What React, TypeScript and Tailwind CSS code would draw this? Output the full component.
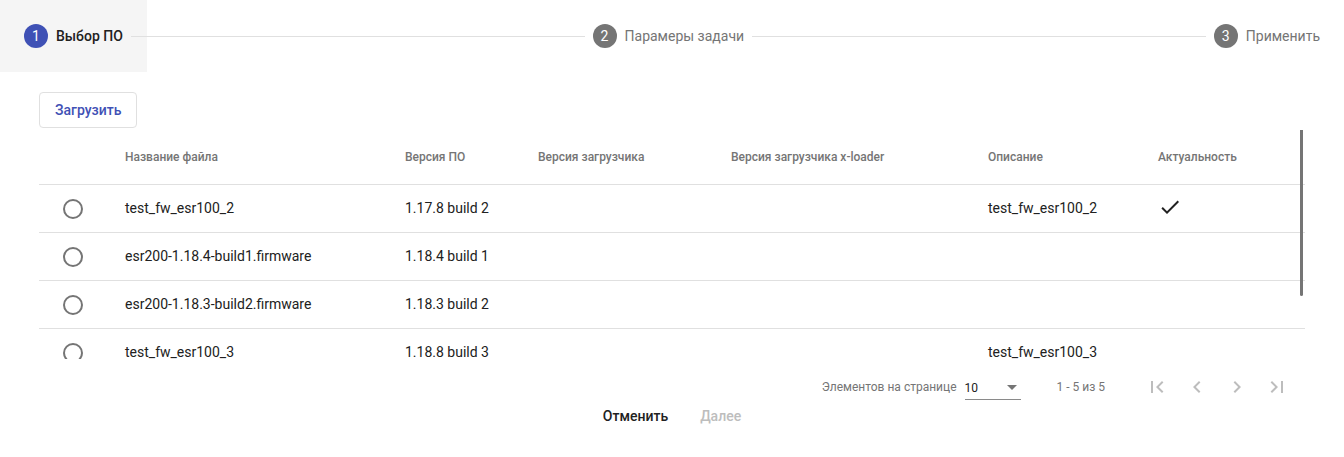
import React from "react";

const rows = [
  { name: "test_fw_esr100_2", ver: "1.17.8 build 2", desc: "test_fw_esr100_2", actual: true },
  { name: "esr200-1.18.4-build1.firmware", ver: "1.18.4 build 1", desc: "", actual: false },
  { name: "esr200-1.18.3-build2.firmware", ver: "1.18.3 build 2", desc: "", actual: false },
  { name: "test_fw_esr100_3", ver: "1.18.8 build 3", desc: "test_fw_esr100_3", actual: false },
];

const cols = "grid grid-cols-[86px_280px_133px_193px_257px_170px_147px]";

function Step({ n, label, active }: { n: number; label: string; active?: boolean }) {
  return (
    <div className={`flex items-center h-[72px] px-6 shrink-0 ${active ? "bg-[#f5f5f5]" : ""}`}>
      <div
        className={`w-6 h-6 rounded-full flex items-center justify-center text-white text-[14px] ${
          active ? "bg-[#3f51b5]" : "bg-[#757575]"
        }`}
      >
        {n}
      </div>
      <div
        className={`ml-2 text-[14px] ${active ? "text-[#212121] font-medium" : "text-[#757575]"}`}
      >
        {label}
      </div>
    </div>
  );
}

function Line() {
  return <div className="flex-auto h-px bg-[#e0e0e0] mx-[-16px] min-w-8" />;
}

function Icon({ d, className }: { d: string; className?: string }) {
  return (
    <svg viewBox="0 0 24 24" width="24" height="24" className={className} fill="currentColor">
      <path d={d} />
    </svg>
  );
}

export default function App() {
  return (
    <div className="w-[1344px] h-[457px] bg-white overflow-hidden" style={{ fontFamily: "Roboto, 'Liberation Sans', sans-serif" }}>
      <div className="flex items-center h-[72px]">
        <Step n={1} label="Выбор ПО" active />
        <Line />
        <Step n={2} label="Парамеры задачи" />
        <Line />
        <Step n={3} label="Применить" />
      </div>

      <div className="px-[39px]">
        <div className="mt-5">
          <button className="h-9 px-[15px] border border-[#e0e0e0] rounded text-[14px] font-medium text-[#3f51b5] bg-white">
            Загрузить
          </button>
        </div>

        <div className="relative h-[230px] mt-px overflow-hidden w-[1266px]">
          <div className={`${cols} h-14 items-center border-b border-[#e0e0e0] text-[12px] font-medium text-[#757575]`}>
            <div />
            <div>Название файла</div>
            <div>Версия ПО</div>
            <div>Версия загрузчика</div>
            <div>Версия загрузчика x-loader</div>
            <div>Описание</div>
            <div>Актуальность</div>
          </div>
          {rows.map((r, i) => (
            <div key={i} className={`${cols} h-12 items-center border-b border-[#e0e0e0] text-[14px] text-[#212121]`}>
              <div className="pl-6">
                <div className="w-5 h-5 rounded-full border-2 border-[#757575]" />
              </div>
              <div>{r.name}</div>
              <div>{r.ver}</div>
              <div />
              <div />
              <div>{r.desc}</div>
              <div>
                {r.actual && (
                  <Icon d="M9 16.17L4.83 12l-1.42 1.41L9 19 21 7l-1.41-1.41z" className="text-[#212121] -mt-[3px]" />
                )}
              </div>
            </div>
          ))}
          <div className="absolute right-[2px] top-px w-[3px] h-[166px] bg-[#757575] rounded-b-sm" />
        </div>

        <div className="flex items-center justify-end h-10 mt-2 pr-2 text-[12px] text-[#757575]">
          <div className="mr-2">Элементов на странице</div>
          <div className="w-[56px] h-[26px] border-b border-[#8a8a8a] flex items-center justify-between">
            <span className="text-[#212121] pt-[2px]">10</span>
            <div className="w-0 h-0 border-l-[5px] border-r-[5px] border-t-[5px] border-l-transparent border-r-transparent border-t-[#757575] mr-[4px] mt-[2px]" />
          </div>
          <div className="ml-[36px] mr-8">1 - 5 из 5</div>
          <div className="flex text-[#bdbdbd]">
            <div className="w-10 h-10 flex items-center justify-center">
              <Icon d="M18.41 16.59L13.82 12l4.59-4.59L17 6l-6 6 6 6zM6 6h2v12H6z" />
            </div>
            <div className="w-10 h-10 flex items-center justify-center">
              <Icon d="M15.41 7.41L14 6l-6 6 6 6 1.41-1.41L10.83 12z" />
            </div>
            <div className="w-10 h-10 flex items-center justify-center">
              <Icon d="M10 6L8.59 7.41 13.17 12l-4.58 4.59L10 18l6-6z" />
            </div>
            <div className="w-10 h-10 flex items-center justify-center">
              <Icon d="M5.59 7.41L10.18 12l-4.59 4.59L7 18l6-6-6-6zM16 6h2v12h-2z" />
            </div>
          </div>
        </div>

        <div className="flex justify-center -mt-[1px]">
          <button className="h-5 px-4 text-[14px] font-medium text-[#212121] leading-5">Отменить</button>
          <button className="h-5 px-4 text-[14px] font-medium text-[#bdbdbd] leading-5">Далее</button>
        </div>
      </div>
    </div>
  );
}
